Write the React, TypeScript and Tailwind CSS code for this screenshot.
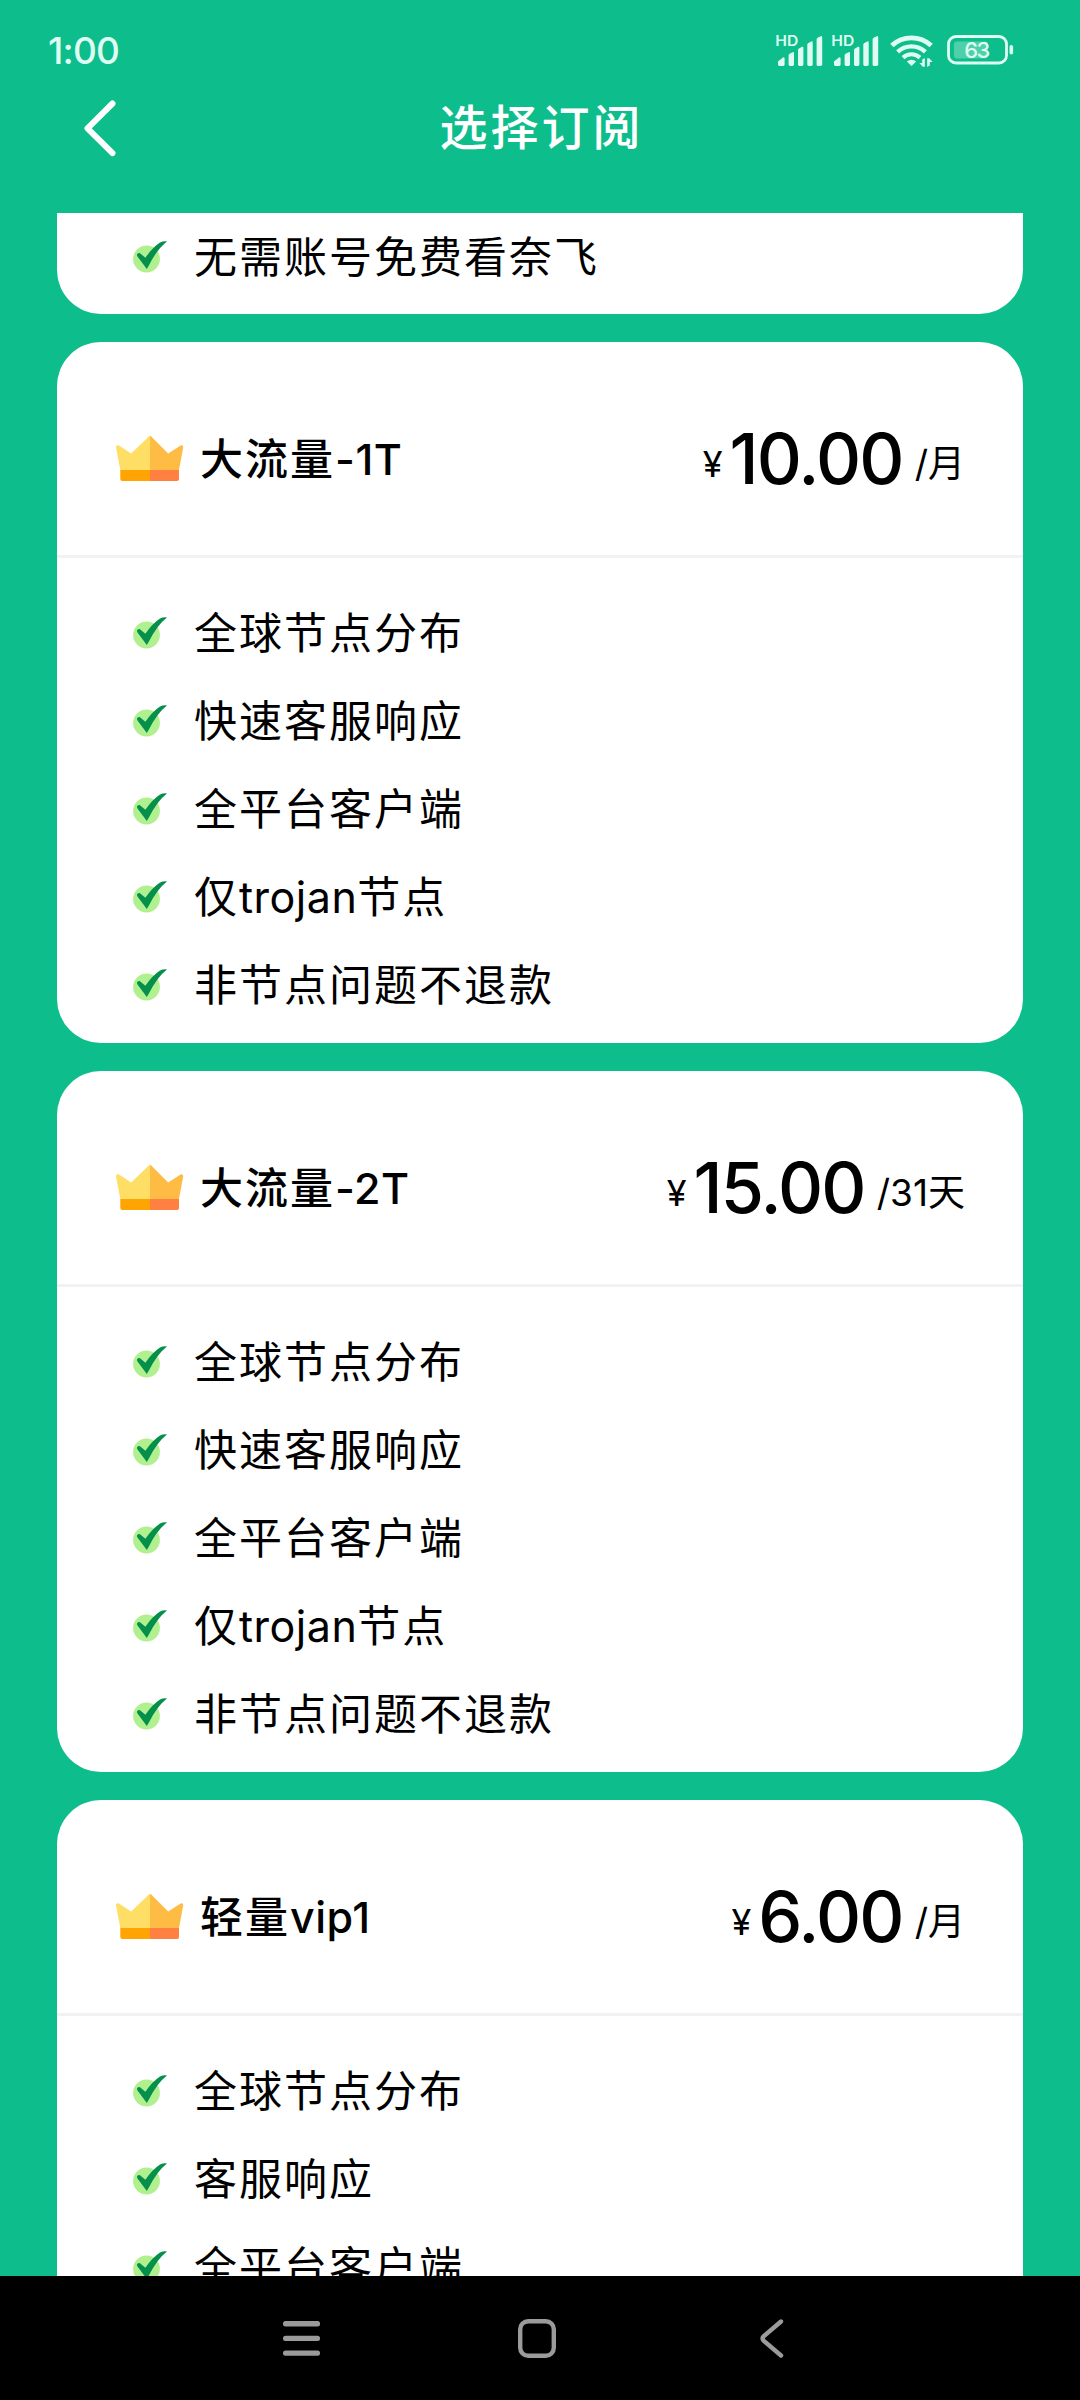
const PLANS = [
  {
    name: "大流量-1T",
    price: "10.00",
    unit: "/月",
    features: ["全球节点分布", "快速客服响应", "全平台客户端", "仅trojan节点", "非节点问题不退款"],
  },
  {
    name: "大流量-2T",
    price: "15.00",
    unit: "/31天",
    features: ["全球节点分布", "快速客服响应", "全平台客户端", "仅trojan节点", "非节点问题不退款"],
  },
  {
    name: "轻量vip1",
    price: "6.00",
    unit: "/月",
    features: ["全球节点分布", "客服响应", "全平台客户端"],
  },
];

function Signal() {
  return (
    <svg className="h-8 w-[47px] overflow-visible" viewBox="0 0 47 32" fill="currentColor">
      <text x="-0.8" y="12.4" fontFamily="Inter" fontSize="14.5" fontWeight="600" textLength="23" lengthAdjust="spacingAndGlyphs">HD</text>
      <path d="M2 30.600v-3.200l4.600-3.700q2-1.200 2 .8v6.100q0 1.400-1.400 1.400H3.400q-1.400 0-1.400-1.400z" />
      <path d="M12.600 21.400q0-1 1-1.600l3-1.600q1.400-.6 1.400 1v11.400q0 1.400-1.400 1.400H14q-1.400 0-1.400-1.400z" />
      <path d="M22 16q0-1 1-1.600l3-1.600q1.400-.6 1.400 1v16.800q0 1.400-1.400 1.400h-2.600Q22 32 22 30.600z" />
      <path d="M31.300 10.600q0-1 1-1.600l3-1.600q1.400-.6 1.400 1v22.200q0 1.400-1.400 1.400h-2.600q-1.400 0-1.400-1.400z" />
      <path d="M40.600 5.400q0-1 1-1.600l3.200-1.600q1.400-.6 1.400 1v27.400q0 1.400-1.400 1.400H42q-1.400 0-1.400-1.400z" />
    </svg>
  );
}

function Wifi() {
  return (
    <svg className="h-[34px] w-[43px]" viewBox="0 0 43 34" fill="none" stroke="currentColor">
      <path d="M1.800 11.600a29 29 0 0 1 39.400 0" strokeWidth="4.800" />
      <path d="M7.600 17.800a20.500 20.500 0 0 1 27.800 0" strokeWidth="4.400" />
      <path d="M13 23.600a12.500 12.500 0 0 1 17 0" strokeWidth="4.200" />
      <path d="M16.800 27.600q4.700-3.600 9.400 0L21.500 32z" fill="currentColor" stroke="none" />
      <path d="M34.800 24v8.800h-2l-3.400-3.800h2.800v-3.500zM37.200 33v-8.800h2l3.400 3.800h-2.800v3.500z" fill="currentColor" stroke="none" />
    </svg>
  );
}

function Battery() {
  return (
    <svg className="h-[30px] w-[67px]" viewBox="0 0 67 30">
      <rect x="7" y="6.500" width="34" height="17" rx="3" fill="#fff" opacity=".28" />
      <rect x="1.500" y="1.500" width="58" height="26.500" rx="7.500" fill="none" stroke="currentColor" strokeWidth="2.800" />
      <rect x="62.500" y="10" width="3.600" height="9.500" rx="1.800" fill="currentColor" />
      <text x="17.300" y="22.800" fontFamily="Inter" fontSize="22" fontWeight="500" fill="currentColor" textLength="26">63</text>
    </svg>
  );
}

function Crown() {
  return (
    <svg className="h-[45px] w-[68px]" viewBox="0 0 68 45">
      <path d="M34 0Q33 0 32 1.200L15.200 17.600 3 9.400Q-.2 8.400 0 11.600L4.300 34H34z" fill="#ffde66" />
      <path d="M34 0Q35 0 36 1.200L52.200 17.600 64.600 9.400Q67.400 8.400 67.200 11.600L63 34H34z" fill="#ffbc45" />
      <path d="M4.300 34H34v11H6.300q-2 0-2-2z" fill="#ffa403" />
      <path d="M34 34h29v9q0 2-2 2H34z" fill="#ff8040" />
    </svg>
  );
}

function Check() {
  return (
    <svg className="h-8 w-[35px]" viewBox="0 0 35 32">
      <circle cx="13.500" cy="18" r="13.400" fill="#b0f08f" />
      <path d="M4.200 13q1.200-1.400 2.800-.8l5.400 4.600Q19.500 6.500 27 1.600 30 0 34 .4 24 8 15.600 25L13.800 28 4.500 15.500Q3.600 14 4.200 13z" fill="#04904a" />
    </svg>
  );
}

// Chinese glyphs are tracked wider than latin runs
function Mixed({ text }: { text: string }) {
  return (
    <>
      {text.split(/([\x21-\x7e]+)/).map((part, i) => (
        <span key={i} className={i % 2 ? "tracking-[0.5px]" : "tracking-[2px]"}>{part}</span>
      ))}
    </>
  );
}

function Feature({ text }: { text: string }) {
  return (
    <li className="flex h-[88px] items-center pl-[76px]">
      <Check />
      <span className="ml-[26px] whitespace-nowrap text-[43px] leading-[60px]">
        <Mixed text={text} />
      </span>
    </li>
  );
}

function PlanCard({ plan }: { plan: (typeof PLANS)[number] }) {
  return (
    <section className="h-[701px] shrink-0 overflow-hidden rounded-[44px] bg-white">
      <header className="flex h-[216px] items-center border-b-[3px] border-[#f2f2f2] pl-[59px] pr-[58px] pt-5">
        <Crown />
        <h2 className="ml-[16px] whitespace-nowrap text-[43px] font-medium leading-[60px]">
          <Mixed text={plan.name} />
        </h2>
        <div className="ml-auto flex items-center whitespace-nowrap">
          <span className="mt-[11px] text-[36px] leading-none">¥</span>
          <span className="ml-[7px] text-[70px] font-medium leading-none tracking-[-1.8px]">{plan.price}</span>
          <span className="ml-[12px] mt-[10px] text-[37px] leading-none">{plan.unit}</span>
        </div>
      </header>
      <ul className="pt-[31px]">
        {plan.features.map((text) => (
          <Feature key={text} text={text} />
        ))}
      </ul>
    </section>
  );
}

export default function App() {
  return (
    <div className="flex h-[2400px] w-[1080px] flex-col overflow-hidden bg-[#0dbd8b] font-[Inter,'Noto_Sans_CJK_SC',sans-serif] text-black">
      <div className="flex h-[84px] shrink-0 items-start pl-[48px] pr-[66px] pt-[34px] text-[#dffcf2]">
        <span className="text-[37px] font-medium leading-[33px] tracking-[-0.8px]">1:00</span>
        <div className="ml-auto flex items-start">
          <Signal />
          <div className="ml-[9px]"><Signal /></div>
          <div className="ml-[11px]"><Wifi /></div>
          <div className="ml-[14px] mt-px"><Battery /></div>
        </div>
      </div>

      <div className="grid h-[129px] shrink-0 grid-cols-[200px_1fr_200px] items-start">
        <svg className="ml-[84px] mt-4 h-[57px] w-8" viewBox="0 0 32 57" fill="none" stroke="#fff" strokeWidth="6" strokeLinecap="round" strokeLinejoin="round">
          <path d="M28.500 3.500 3.500 28.300l25 24.800" />
        </svg>
        <h1 className="mt-[14px] pl-[3px] text-center text-[48px] font-medium leading-[60px] tracking-[3px] text-white">选择订阅</h1>
      </div>

      <main className="flex min-h-0 flex-1 flex-col gap-7 overflow-hidden px-[57px]">
        <section className="h-[101px] shrink-0 rounded-b-[44px] bg-white">
          <ul>
            <Feature text="无需账号免费看奈飞" />
          </ul>
        </section>
        {PLANS.map((plan) => (
          <PlanCard key={plan.name} plan={plan} />
        ))}
      </main>

      <nav className="flex h-[124px] shrink-0 items-center bg-black pl-[283px] text-[#9b9b9b]">
        <svg className="h-[35px] w-[37px]" viewBox="0 0 37 35" fill="currentColor">
          <rect width="37" height="5.400" rx="2.500" />
          <rect y="14.700" width="37" height="5.400" rx="2.500" />
          <rect y="29.400" width="37" height="5.400" rx="2.500" />
        </svg>
        <svg className="ml-[198px] h-[39px] w-[38px]" viewBox="0 0 38 39" fill="none" stroke="currentColor" strokeWidth="4.400">
          <rect x="2.200" y="2.200" width="33.600" height="34.600" rx="8" />
        </svg>
        <svg className="ml-[204px] h-[39px] w-6" viewBox="0 0 24 39" fill="none" stroke="currentColor" strokeWidth="4.400" strokeLinecap="round">
          <path d="M21 2.500 3.600 17.300q-2 2.200 0 4.400L21 36.500" />
        </svg>
      </nav>
    </div>
  );
}
